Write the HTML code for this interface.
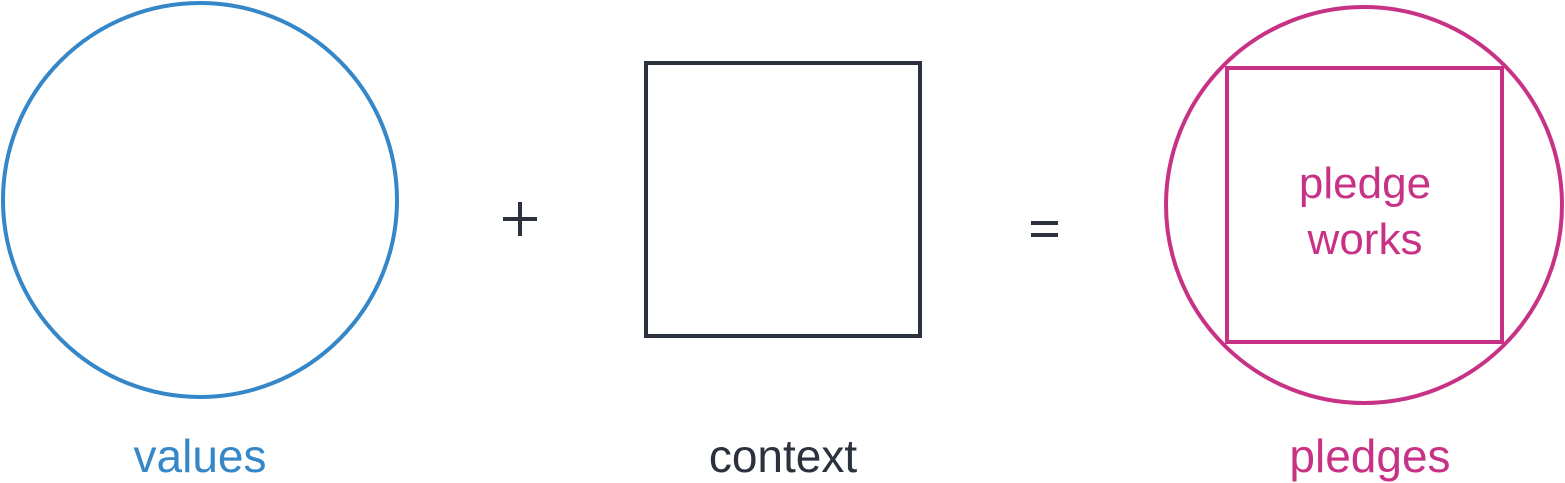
<!DOCTYPE html>
<html><head><style>
html,body{margin:0;padding:0;background:#fff;width:1565px;height:483px;overflow:hidden}
text{font-family:"Liberation Sans",sans-serif}
</style></head><body>
<svg width="1565" height="483" viewBox="0 0 1565 483" xmlns="http://www.w3.org/2000/svg">
<circle cx="200" cy="200" r="197" fill="none" stroke="#3687c8" stroke-width="4"/>
<rect x="646" y="63" width="274" height="273" fill="none" stroke="#2b323d" stroke-width="4"/>
<circle cx="1364" cy="205" r="198" fill="none" stroke="#c83286" stroke-width="4"/>
<rect x="1227" y="68" width="275" height="274" fill="none" stroke="#c83286" stroke-width="4"/>
<rect x="503" y="217" width="34" height="4" fill="#2b323d"/>
<rect x="518" y="202" width="4" height="34" fill="#2b323d"/>
<rect x="1031" y="221" width="27" height="4" fill="#2b323d"/>
<rect x="1031" y="233" width="27" height="4" fill="#2b323d"/>
<text x="1365" y="198" font-size="44" fill="#c83286" text-anchor="middle">pledge</text>
<text x="1365" y="254" font-size="44" fill="#c83286" text-anchor="middle">works</text>
<text x="200" y="472" font-size="46" fill="#3687c8" text-anchor="middle">values</text>
<text x="783" y="472" font-size="46" fill="#2b323d" text-anchor="middle">context</text>
<text x="1370" y="472" font-size="46" fill="#c83286" text-anchor="middle">pledges</text>
</svg>
</body></html>
